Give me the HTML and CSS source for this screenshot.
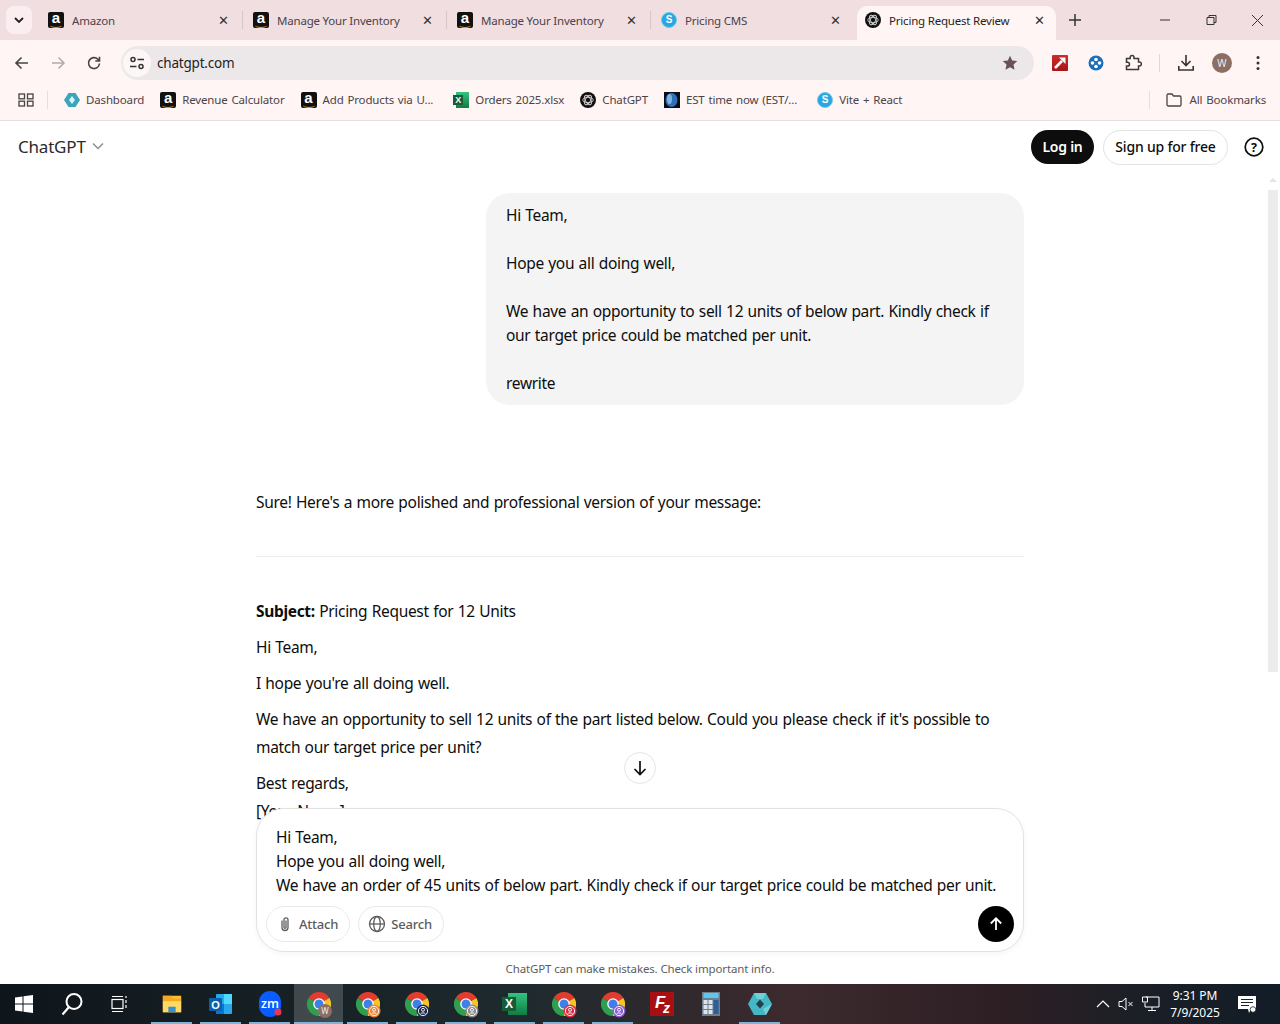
FILE: index.html
```html
<!DOCTYPE html>
<html lang="en">
<head>
    <meta charset="UTF-8">
    <title>Pricing Request Review</title>
    <link rel="stylesheet" href="styles.css">
</head>
<body>
    <svg class="defs" width="0" height="0">
        <symbol id="gpt" viewBox="0 0 16 16">
            <circle cx="8" cy="8" r="8" fill="#111"/>
            <g fill="none" stroke="#ccc" stroke-width=".9">
                <ellipse cx="8" cy="8" rx="5.200" ry="2.600"/>
                <ellipse cx="8" cy="8" rx="5.200" ry="2.600" transform="rotate(60 8 8)"/>
                <ellipse cx="8" cy="8" rx="5.200" ry="2.600" transform="rotate(120 8 8)"/>
            </g>
        </symbol>
        <symbol id="diamond" viewBox="0 0 16 16">
            <path d="M4.500 1h7L16 8l-4.500 7h-7L0 8z" fill="#3aa6b9"/>
            <path d="M8 4l3 4-3 4-3-4z" fill="#d8f3f6"/>
        </symbol>
        <symbol id="est" viewBox="0 0 16 16">
            <rect width="16" height="16" fill="#0a0d18"/>
            <ellipse cx="7.500" cy="8" rx="6" ry="7" fill="#2f6fb5"/>
            <ellipse cx="5.500" cy="7" rx="2.500" ry="5" fill="#7fb2e0"/>
        </symbol>
        <symbol id="chrome" viewBox="0 0 24 24">
            <path d="M12 12 1.600 6A12 12 0 0 1 22.400 6z" fill="#e33b2e"/>
            <path d="M12 12 22.400 6A12 12 0 0 1 12 24z" fill="#f7c325"/>
            <path d="M12 12V24A12 12 0 0 1 1.600 6z" fill="#2f9e4f"/>
            <circle cx="12" cy="12" r="5.800" fill="#fff"/>
            <circle cx="12" cy="12" r="4.500" fill="#3d80ea"/>
        </symbol>
        <symbol id="person" viewBox="0 0 14 14">
            <circle cx="7" cy="7" r="6.500" fill="currentColor"/>
            <circle cx="7" cy="7" r="4.600" fill="none" stroke="#fff" stroke-width=".9"/>
            <circle cx="7" cy="5.800" r="1.500" fill="none" stroke="#fff" stroke-width=".9"/>
            <path d="M4.500 10c.6-1.500 4.400-1.500 5 0" fill="none" stroke="#fff" stroke-width=".9"/>
        </symbol>
    </svg>

    <div class="tabstrip">
        <button class="tab-search">
            <svg width="10" height="6" viewBox="0 0 10 6"><path d="M1 1l4 4 4-4" fill="none" stroke="#222" stroke-width="1.800"/></svg>
        </button>
        <div class="tab tab-first">
            <span class="ic-amazon">a</span>
            <span class="tab-title">Amazon</span>
            <span class="tab-close">&#x2715;</span>
        </div>
        <div class="tab">
            <span class="ic-amazon">a</span>
            <span class="tab-title">Manage Your Inventory</span>
            <span class="tab-close">&#x2715;</span>
        </div>
        <div class="tab">
            <span class="ic-amazon">a</span>
            <span class="tab-title">Manage Your Inventory</span>
            <span class="tab-close">&#x2715;</span>
        </div>
        <div class="tab tab-last">
            <span class="ic-s">S</span>
            <span class="tab-title">Pricing CMS</span>
            <span class="tab-close">&#x2715;</span>
        </div>
        <div class="tab tab-active">
            <svg class="fav"><use href="#gpt"/></svg>
            <span class="tab-title">Pricing Request Review</span>
            <span class="tab-close">&#x2715;</span>
        </div>
        <svg class="new-tab" width="12" height="12" viewBox="0 0 12 12"><path d="M6 0v12M0 6h12" stroke="#333" stroke-width="1.500"/></svg>
        <div class="win-controls">
            <svg width="46" height="12" viewBox="0 0 46 12"><path d="M18 6h10" stroke="#333"/></svg>
            <svg width="46" height="12" viewBox="0 0 46 12"><path d="M19 3.500h7v7h-7zM21 3.500V1.500h7v7h-2" fill="none" stroke="#333"/></svg>
            <svg width="46" height="12" viewBox="0 0 46 12"><path d="M18 1l11 11M29 1L18 12" stroke="#333"/></svg>
        </div>
    </div>

    <div class="toolbar">
        <svg class="tool" width="16" height="16" viewBox="0 0 16 16"><path d="M14 8H2.500M7.500 2.500L2 8l5.500 5.500" fill="none" stroke="#444" stroke-width="1.600"/></svg>
        <svg class="tool" width="16" height="16" viewBox="0 0 16 16"><path d="M2 8h11.500M8.500 2.500L14 8l-5.500 5.500" fill="none" stroke="#b5abad" stroke-width="1.600"/></svg>
        <svg class="tool" width="16" height="16" viewBox="0 0 16 16"><path d="M13.500 8.500a5.500 5.500 0 1 1-1.600-4.300L13.500 6M13.500 1.800V6H9.300" fill="none" stroke="#444" stroke-width="1.600"/></svg>
        <div class="omnibox">
            <span class="site-chip">
                <svg width="16" height="14" viewBox="0 0 16 14"><g fill="none" stroke="#333" stroke-width="1.500"><circle cx="4" cy="3.500" r="2"/><path d="M8.500 3.500H15M1 10.500h6.500"/><circle cx="12" cy="10.500" r="2"/></g></svg>
            </span>
            <span class="url">chatgpt.com</span>
            <svg class="star" width="16" height="16" viewBox="0 0 16 16"><path d="M8 .8l2.200 4.700 5.100.6-3.800 3.500 1 5.100L8 12.200l-4.500 2.500 1-5.100L.7 6.100l5.100-.6z" fill="#6b505c"/></svg>
        </div>
        <div class="tool-right">
            <svg width="16" height="16" viewBox="0 0 16 16"><defs><linearGradient id="red-ext" x1="0" y1="0" x2="0" y2="1"><stop offset="0" stop-color="#d12a26"/><stop offset="1" stop-color="#a5161a"/></linearGradient></defs><rect width="16" height="16" rx="1" fill="url(#red-ext)"/><path d="M7 2.500h6.500V9z" fill="#fff"/><path d="M10 6L3 13" stroke="#fff" stroke-width="2.600"/></svg>
            <svg width="16" height="16" viewBox="0 0 16 16"><circle cx="8" cy="8" r="7.500" fill="#1b6fb8"/><circle cx="8" cy="4.500" r="1.800" fill="#fff"/><circle cx="8" cy="11.500" r="1.800" fill="#fff"/><circle cx="4.500" cy="8" r="1.800" fill="#fff"/><circle cx="11.500" cy="8" r="1.800" fill="#fff"/></svg>
            <svg width="18" height="18" viewBox="0 0 18 18"><path d="M2.500 4.500h3.700V3.400a1.900 1.900 0 0 1 3.800 0v1.100h4.500v3.600h1a1.900 1.900 0 0 1 0 3.800h-1v3.600H2.500v-3.400h1.100a1.900 1.900 0 0 0 0-3.800H2.500z" fill="none" stroke="#3a3a3a" stroke-width="1.500"/></svg>
            <span class="tool-sep"></span>
            <svg class="tool-dl" width="16" height="16" viewBox="0 0 16 16"><path d="M8 0v10M3.500 6L8 10.500 12.500 6M.8 11v4h14.400v-4" fill="none" stroke="#333" stroke-width="1.600"/></svg>
            <span class="avatar">W</span>
            <svg class="tool-menu" width="4" height="16" viewBox="0 0 4 16"><circle cx="2" cy="2.500" r="1.500" fill="#333"/><circle cx="2" cy="8" r="1.500" fill="#333"/><circle cx="2" cy="13.500" r="1.500" fill="#333"/></svg>
        </div>
    </div>

    <div class="bookmarks">
        <svg class="apps" width="16" height="14" viewBox="0 0 16 14"><g fill="none" stroke="#444" stroke-width="1.300"><rect x="1" y="1" width="5.500" height="4.800"/><rect x="9.500" y="1" width="5.500" height="4.800"/><rect x="1" y="8.200" width="5.500" height="4.800"/><rect x="9.500" y="8.200" width="5.500" height="4.800"/></g></svg>
        <span class="bm-sep"></span>
        <div class="bm"><svg class="fav"><use href="#diamond"/></svg>Dashboard</div>
        <div class="bm"><span class="ic-amazon">a</span>Revenue Calculator</div>
        <div class="bm bm-cut"><span class="ic-amazon">a</span>Add Products via U...</div>
        <div class="bm"><span class="ic-xls"><b>X</b></span>Orders 2025.xlsx</div>
        <div class="bm"><svg class="fav"><use href="#gpt"/></svg>ChatGPT</div>
        <div class="bm bm-cut"><svg class="fav"><use href="#est"/></svg>EST time now (EST/...</div>
        <div class="bm"><span class="ic-s">S</span>Vite + React</div>
        <div class="bm-all">
            <span class="bm-sep"></span>
            <svg width="16" height="14" viewBox="0 0 16 14"><path d="M1 2.500A1.300 1.300 0 0 1 2.300 1h3.700l1.500 2h6.200A1.300 1.300 0 0 1 15 4.300v7.400a1.300 1.300 0 0 1-1.300 1.300H2.300A1.300 1.300 0 0 1 1 11.700z" fill="none" stroke="#444" stroke-width="1.300"/></svg>
            All Bookmarks
        </div>
    </div>

    <div class="app">
        <header class="app-header">
            <div class="model">ChatGPT
                <svg width="12" height="8" viewBox="0 0 12 8"><path d="M1 1.500l5 5 5-5" fill="none" stroke="#8f8f8f" stroke-width="1.500"/></svg>
            </div>
            <button class="btn-login">Log in</button>
            <button class="btn-signup">Sign up for free</button>
            <svg class="help" width="20" height="20" viewBox="0 0 20 20"><circle cx="10" cy="10" r="8.800" fill="none" stroke="#0d0d0d" stroke-width="1.700"/><text x="10" y="14.500" text-anchor="middle" font-family="Open Sans" font-weight="700" font-size="12.500" fill="#0d0d0d">?</text></svg>
        </header>

        <div class="chat">
            <div class="thread">
                <div class="user-msg">Hi Team,<br><br>Hope you all doing well,<br><br>We have an opportunity to sell 12 units of below part. Kindly check if our target price could be matched per unit.<br><br>rewrite</div>
                <div class="reply">
                    <p>Sure! Here's a more polished and professional version of your message:</p>
                    <hr>
                    <p><strong>Subject:</strong> Pricing Request for 12 Units</p>
                    <p>Hi Team,</p>
                    <p>I hope you're all doing well.</p>
                    <p>We have an opportunity to sell 12 units of the part listed below. Could you please check if it's possible to match our target price per unit?</p>
                    <p>Best regards,<br>[Your Name]</p>
                </div>
            </div>
            <button class="scroll-down">
                <svg width="16" height="16" viewBox="0 0 16 16"><path d="M8 1v13.500M2.500 9L8 14.500 13.500 9" fill="none" stroke="#0d0d0d" stroke-width="1.700"/></svg>
            </button>
        </div>

        <div class="composer">
            <div class="composer-text">Hi Team,<br>Hope you all doing well,<br>We have an order of 45 units of below part. Kindly check if our target price could be matched per unit.</div>
            <div class="composer-row">
                <button class="pill">
                    <svg width="18" height="18" viewBox="0 0 18 18"><path d="M6 5.500v7a3 3 0 0 0 6 0V4.800a2 2 0 0 0-4 0v7.500a1 1 0 0 0 2 0V5.500" fill="none" stroke="#5d5d5d" stroke-width="1.300"/></svg>
                    Attach
                </button>
                <button class="pill">
                    <svg width="18" height="18" viewBox="0 0 18 18"><g fill="none" stroke="#5d5d5d" stroke-width="1.300"><circle cx="9" cy="9" r="7.500"/><ellipse cx="9" cy="9" rx="3.300" ry="7.500"/><path d="M1.500 9h15"/></g></svg>
                    Search
                </button>
                <button class="send">
                    <svg width="14" height="14" viewBox="0 0 14 14"><path d="M7 13V1.500M1.800 6.500L7 1.300l5.200 5.200" fill="none" stroke="#fff" stroke-width="1.800"/></svg>
                </button>
            </div>
        </div>
        <div class="disclaimer">ChatGPT can make mistakes. Check important info.</div>

        <div class="scrollbar">
            <span class="sb-arrow"></span>
            <span class="sb-thumb"></span>
        </div>
    </div>

    <footer class="taskbar">
        <div class="task task-sys">
            <svg width="18" height="18" viewBox="0 0 18 18"><path d="M0 2.500l7.500-1v7H0zM8.500 1.300L18 0v8.500H8.500zM0 9.500h7.500v7l-7.500-1zM8.500 9.500H18V18l-9.500-1.300z" fill="#fff"/></svg>
        </div>
        <div class="task task-sys">
            <svg width="24" height="24" viewBox="0 0 24 24"><circle cx="14" cy="9.500" r="7.500" fill="none" stroke="#fff" stroke-width="2"/><path d="M9 15L2.500 22.500" stroke="#fff" stroke-width="2.200"/></svg>
        </div>
        <div class="task task-sys">
            <svg width="18" height="18" viewBox="0 0 18 18"><g fill="none" stroke="#fff" stroke-width="1.200"><path d="M1 1.500h11M1 16.500h11"/><rect x="1" y="4.500" width="11" height="9"/><path d="M15 1v2M15 5v3M15 10v3"/></g></svg>
        </div>
        <div class="task-gap"></div>
        <div class="task task-on">
            <svg width="24" height="22" viewBox="0 0 26 24"><path d="M3 3h20v18H3z" fill="#fbc02d"/><path d="M3 3h9l2 3h9v3H3z" fill="#f6a821"/><rect x="3" y="9" width="20" height="12" fill="#ffd966"/><rect x="9" y="15" width="8" height="6" fill="#3a8fd0"/></svg>
        </div>
        <div class="task task-on">
            <svg width="24" height="24" viewBox="0 0 24 24"><rect x="7" y="2" width="16" height="20" rx="1" fill="#28a8ea"/><rect x="15" y="2" width="8" height="10" fill="#50d9ff"/><rect x="7" y="12" width="8" height="10" fill="#0078d4"/><rect y="6" width="13" height="13" rx="1" fill="#0a5fae"/><text x="6.500" y="16.500" text-anchor="middle" font-family="Liberation Sans" font-weight="700" font-size="11" fill="#fff">O</text></svg>
        </div>
        <div class="task task-on">
            <svg width="24" height="26" viewBox="0 0 24 26"><rect x="1" width="22" height="26" rx="11" fill="#0b5cff"/><text x="12" y="17" text-anchor="middle" font-family="Open Sans" font-weight="600" font-size="12.500" fill="#fff">zm</text><circle cx="20" cy="21" r="3.500" fill="#e5394a"/></svg>
        </div>
        <div class="task task-on task-active">
            <svg class="chrome-ic"><use href="#chrome"/></svg>
            <span class="badge badge-w">W</span>
        </div>
        <div class="task task-on">
            <svg class="chrome-ic"><use href="#chrome"/></svg>
            <svg class="badge badge-orange"><use href="#person"/></svg>
        </div>
        <div class="task task-on">
            <svg class="chrome-ic"><use href="#chrome"/></svg>
            <svg class="badge badge-navy"><use href="#person"/></svg>
        </div>
        <div class="task task-on">
            <svg class="chrome-ic"><use href="#chrome"/></svg>
            <svg class="badge badge-grey"><use href="#person"/></svg>
        </div>
        <div class="task task-on">
            <span class="ic-xls ic-xls-lg"><b>X</b></span>
        </div>
        <div class="task task-on">
            <svg class="chrome-ic"><use href="#chrome"/></svg>
            <svg class="badge badge-red"><use href="#person"/></svg>
        </div>
        <div class="task task-on">
            <svg class="chrome-ic"><use href="#chrome"/></svg>
            <svg class="badge badge-purple"><use href="#person"/></svg>
        </div>
        <div class="task">
            <svg width="24" height="24" viewBox="0 0 24 24"><rect width="24" height="24" fill="#a80f12"/><text x="5" y="16" font-family="Liberation Sans" font-weight="700" font-style="italic" font-size="17" fill="#fff">F</text><text x="13" y="21" font-family="Liberation Sans" font-weight="700" font-style="italic" font-size="14" fill="#fff">z</text></svg>
        </div>
        <div class="task">
            <svg width="18" height="24" viewBox="0 0 18 24"><rect width="18" height="24" fill="#6f7e8e"/><rect x="1.500" y="1" width="15" height="5" fill="#5cc8ee"/><g fill="#dce5ea"><rect x="1.500" y="8" width="4" height="4"/><rect x="6.500" y="8" width="4" height="4"/><rect x="1.500" y="13" width="4" height="4"/><rect x="6.500" y="13" width="4" height="4"/><rect x="1.500" y="18" width="4" height="4"/><rect x="6.500" y="18" width="4" height="4"/></g><rect x="11.500" y="8" width="5" height="14" fill="#2a5f9a"/></svg>
        </div>
        <div class="task task-on">
            <svg width="24" height="22" viewBox="0 0 24 22"><path d="M6 0h12l6 11-6 11H6L0 11z" fill="#45b7c4"/><path d="M6 0h12l-3 6H9zM24 11l-6 11-3-6z" fill="#6fd0d8"/><path d="M12 6.500l4 4.500-4 4.500L8 11z" fill="#233f4c"/></svg>
        </div>

        <div class="tray">
            <svg width="14" height="8" viewBox="0 0 14 8"><path d="M1 7l6-6 6 6" fill="none" stroke="#fff" stroke-width="1.200"/></svg>
            <svg width="16" height="14" viewBox="0 0 16 14"><path d="M1 4.500h3L8 1v12L4 9.500H1zM10.500 5l4 4M14.500 5l-4 4" fill="none" stroke="#fff"/></svg>
            <svg width="18" height="16" viewBox="0 0 18 16"><path d="M4 1h13v10H3V7M10 11v3M6 14.500h8M.5 1h5v5h-5z" fill="none" stroke="#fff"/></svg>
            <div class="clock"><span>9:31 PM</span><span>7/9/2025</span></div>
            <svg class="notify" width="18" height="17" viewBox="0 0 18 17"><path d="M0 0h18v13h-5l-2 4-1-4H0z" fill="#fff"/><path d="M3 3.500h12M3 6.500h12M3 9.500h8" stroke="#1a222b"/><circle cx="15" cy="13.500" r="2.800" fill="#fff" stroke="#1a222b" stroke-width=".8"/></svg>
        </div>
    </footer>
</body>
</html>
```

FILE: styles.css
```css
* {
    box-sizing: border-box;
}
html, body {
    margin: 0;
    height: 1024px;
    overflow: hidden;
}
body {
    display: flex;
    flex-direction: column;
    font-family: "Noto Sans", "Open Sans", sans-serif;
    color: #0d0d0d;
    background: #fff;
}
button {
    font-family: inherit;
    border: 0;
    background: none;
    padding: 0;
}
.defs {
    position: absolute;
}
.fav {
    width: 16px;
    height: 16px;
    flex: none;
}

/* site icons */
.ic-amazon {
    width: 16px;
    height: 16px;
    flex: none;
    position: relative;
    background: #111;
    border-radius: 2px;
    color: #fff;
    font-family: "Liberation Sans", sans-serif;
    font-size: 15px;
    font-weight: 700;
    line-height: 12px;
    letter-spacing: 0;
    text-align: center;
}
.ic-amazon::after {
    content: "";
    position: absolute;
    left: 2px;
    right: 2px;
    bottom: 0;
    height: 4px;
    border-bottom: 1.500px solid #f5a623;
    border-radius: 0 0 50% 50%;
}
.ic-s {
    width: 16px;
    height: 16px;
    flex: none;
    border-radius: 50%;
    background: #2aa6df;
    border: 1px solid #6cc8ee;
    color: #fff;
    font-family: "Liberation Sans", sans-serif;
    font-size: 10px;
    font-weight: 700;
    line-height: 14px;
    letter-spacing: 0;
    text-align: center;
}
.ic-xls {
    width: 16px;
    height: 16px;
    flex: none;
    position: relative;
    background: linear-gradient(#33c481, #107c41) 3px 0 / calc(100% - 3px) 100% no-repeat;
}
.ic-xls b {
    position: absolute;
    left: 0;
    top: 3px;
    width: 10px;
    height: 10px;
    background: #185c37;
    color: #fff;
    font-family: "Liberation Sans", sans-serif;
    font-size: 9px;
    line-height: 10px;
    letter-spacing: 0;
    text-align: center;
}
.ic-xls-lg {
    width: 25px;
    height: 22px;
    background-position: 6px 0;
    background-size: calc(100% - 6px) 100%;
}
.ic-xls-lg b {
    top: 4px;
    width: 14px;
    height: 14px;
    font-size: 12px;
    line-height: 14px;
}

/* browser chrome */
.tabstrip {
    height: 40px;
    flex: none;
    display: flex;
    align-items: flex-end;
    background: #f1dee1;
    padding-left: 6px;
}
.tab-search {
    width: 26px;
    height: 28px;
    margin: 0 6px 6px 0;
    border-radius: 8px;
    background: #fbeef0;
    display: flex;
    align-items: center;
    justify-content: center;
}
.tab {
    width: 204px;
    height: 34px;
    display: flex;
    align-items: center;
    padding: 0 13px 6px 10px;
    font-size: 11.500px;
    letter-spacing: -0.2px;
    color: #4b4347;
    position: relative;
}
.tab::after {
    content: "";
    position: absolute;
    right: 0;
    top: 5px;
    height: 18px;
    width: 1px;
    background: #d9c4c8;
}
.tab-first {
    width: 205px;
}
.tab-last {
    margin-right: 2px;
}
.tab-last::after, .tab-active::after {
    display: none;
}
.tab-title {
    flex: 1;
    margin-left: 8px;
    white-space: nowrap;
}
.tab-close {
    font-size: 13px;
    color: #333;
    width: 14px;
    text-align: center;
}
.tab-active {
    width: 199px;
    background: #fff5f4;
    border-radius: 10px 10px 0 0;
    color: #1f1f1f;
    padding: 0 10px 6px 8px;
}
.new-tab {
    margin: 0 0 14px 13px;
}
.win-controls {
    margin-left: auto;
    display: flex;
    margin-bottom: 14px;
}
.toolbar {
    height: 45px;
    flex: none;
    display: flex;
    align-items: center;
    background: #fff5f4;
    padding-left: 14px;
}
.tool {
    margin-right: 20px;
}
.omnibox {
    width: 913px;
    height: 34px;
    margin-left: -1px;
    border-radius: 17px;
    background: #ece8ea;
    display: flex;
    align-items: center;
    padding: 0 16px 0 2px;
}
.site-chip {
    width: 28px;
    height: 28px;
    border-radius: 14px;
    background: #fdf6f6;
    display: flex;
    align-items: center;
    justify-content: center;
}
.url {
    flex: 1;
    margin-left: 6px;
    font-size: 13.500px;
    letter-spacing: -0.2px;
    color: #1f1f1f;
}
.tool-right {
    display: flex;
    align-items: center;
    margin-left: 18px;
    gap: 20px;
}
.tool-sep {
    width: 1px;
    height: 18px;
    background: #e6d6d8;
    margin: 0 0 0 -3px;
}
.tool-dl {
    margin-left: -2px;
}
.avatar {
    width: 20px;
    height: 20px;
    border-radius: 50%;
    background: #8a6f66;
    color: #eee;
    font-size: 10px;
    display: flex;
    align-items: center;
    justify-content: center;
    margin: 0 -2px 0 -2px;
}
.tool-menu {
    margin-left: 6px;
}
.bookmarks {
    height: 36px;
    flex: none;
    display: flex;
    align-items: center;
    gap: 16px;
    background: #fff5f4;
    border-bottom: 1px solid #e8dfdf;
    padding: 0 14px 6px 18px;
    font-size: 11.500px;
    letter-spacing: -0.15px;
    word-spacing: 1px;
    color: #4b4347;
    white-space: nowrap;
}
.apps {
    margin-right: -3px;
}
.bm-sep {
    width: 1px;
    height: 18px;
    background: #eadbdd;
}
.bm {
    display: flex;
    align-items: center;
    gap: 6px;
}
.bm-cut {
    margin-right: 4px;
}
.bm-all {
    margin-left: auto;
    display: flex;
    align-items: center;
    gap: 8px;
}
.bm-all .bm-sep {
    margin-right: 8px;
}

/* page */
.app {
    flex: 1;
    min-height: 0;
    display: flex;
    flex-direction: column;
    background: #fff;
    position: relative;
}
.app-header {
    height: 53px;
    flex: none;
    display: flex;
    align-items: center;
    padding: 0 16px 1px 18px;
}
.model {
    font-size: 17px;
    letter-spacing: -0.2px;
    margin: 0 auto 2px 0;
    display: flex;
    align-items: center;
    gap: 6px;
    color: #2b2b2b;
}
.btn-login {
    height: 34px;
    width: 63px;
    margin-right: 1px;
    padding-bottom: 2px;
    border-radius: 17px;
    background: #0d0d0d;
    color: #fff;
    font-size: 14px;
    font-weight: 600;
    letter-spacing: -0.25px;
}
.btn-signup {
    height: 35px;
    width: 125px;
    margin: 0 16px 0 8px;
    padding-bottom: 2px;
    border-radius: 18px;
    border: 1px solid #e3e3e3;
    color: #0d0d0d;
    font-size: 14px;
    font-weight: 500;
    letter-spacing: -0.2px;
}
.chat {
    flex: 1;
    min-height: 0;
    overflow: hidden;
    position: relative;
}
.thread {
    width: 768px;
    margin: 0 auto;
    padding-top: 19px;
    font-size: 15.500px;
    letter-spacing: -0.32px;
    word-spacing: 0.7px;
}
.user-msg {
    width: 538px;
    margin-left: auto;
    padding: 10px 20px;
    line-height: 24px;
    background: #f4f4f4;
    border-radius: 24px;
}
.reply {
    padding-top: 83px;
    line-height: 28px;
}
.reply p {
    margin: 0 0 8px;
}
.reply strong {
    font-weight: 700;
}
.reply hr {
    border: 0;
    border-top: 1px solid #ececec;
    margin: 40px 0 40px;
}
.scroll-down {
    position: absolute;
    left: 624px;
    bottom: 52px;
    width: 32px;
    height: 32px;
    border-radius: 50%;
    border: 1px solid #e5e5e5;
    background: #fff;
    display: flex;
    align-items: center;
    justify-content: center;
}
.composer {
    width: 768px;
    height: 144px;
    margin: -28px auto 0;
    flex: none;
    position: relative;
    background: #fff;
    border: 1px solid #e2e2e2;
    border-radius: 28px;
    box-shadow: 0 2px 6px rgba(0, 0, 0, 0.04);
    padding: 16px 9px 9px;
    font-size: 15.500px;
    letter-spacing: -0.32px;
    word-spacing: 0.7px;
}
.composer-text {
    line-height: 24px;
    padding: 0 10px;
    white-space: nowrap;
}
.composer-row {
    display: flex;
    align-items: center;
    gap: 8px;
    margin-top: 9px;
}
.pill {
    height: 36px;
    padding: 0 11px 0 9px;
    border: 1px solid #e8e8e8;
    border-radius: 18px;
    display: flex;
    align-items: center;
    gap: 5px;
    font-size: 13px;
    font-weight: 500;
    letter-spacing: -0.2px;
    color: #5d5d5d;
}
.send {
    width: 36px;
    height: 36px;
    margin-left: auto;
    border-radius: 50%;
    background: #000;
    display: flex;
    align-items: center;
    justify-content: center;
}
.disclaimer {
    height: 32px;
    flex: none;
    display: flex;
    align-items: center;
    justify-content: center;
    font-size: 11.500px;
    letter-spacing: -0.14px;
    color: #5d5d5d;
}
.scrollbar {
    position: absolute;
    top: 57px;
    right: 2px;
    width: 10px;
    display: flex;
    flex-direction: column;
    align-items: center;
}
.sb-arrow {
    border: 4px solid transparent;
    border-top: 0;
    border-bottom: 4px solid #e4e4e4;
    margin-bottom: 8px;
}
.sb-thumb {
    width: 10px;
    height: 482px;
    background: #ececec;
}

/* windows taskbar */
.taskbar {
    height: 40px;
    flex: none;
    display: flex;
    align-items: stretch;
    background: linear-gradient(90deg, #0f161b 0%, #172126 25%, #1d2a2e 40%, #33292d 55%, #3c2a2e 62%, #2d1f24 78%, #1a1f27 90%, #121c26 100%);
}
.task {
    width: 49px;
    display: flex;
    align-items: center;
    justify-content: center;
    position: relative;
}
.task-sys {
    width: 48px;
}
.task-gap {
    width: 3px;
}
.task-on::after {
    content: "";
    position: absolute;
    left: 4px;
    right: 4px;
    bottom: 0;
    height: 2px;
    background: #7db5d8;
}
.task-active {
    background: rgba(255, 255, 255, 0.18);
}
.task-active::after {
    left: 0;
    right: 0;
}
.chrome-ic {
    width: 24px;
    height: 24px;
}
.badge {
    position: absolute;
    left: 24px;
    top: 20px;
    width: 14px;
    height: 14px;
}
.badge-w {
    background: #8a6f66;
    border-radius: 50%;
    color: #eee;
    font-size: 8px;
    text-align: center;
    line-height: 14px;
}
.badge-orange {
    color: #e8833a;
}
.badge-navy {
    color: #1d2b4a;
}
.badge-grey {
    color: #8d8d8d;
}
.badge-red {
    color: #d93045;
}
.badge-purple {
    color: #8a5fd0;
}
.tray {
    margin-left: auto;
    display: flex;
    align-items: center;
    color: #fff;
}
.tray svg {
    margin-right: 8px;
}
.clock {
    display: flex;
    flex-direction: column;
    align-items: center;
    width: 70px;
    font-size: 12px;
    line-height: 17px;
    letter-spacing: -0.1px;
    margin: 0 8px 0 -8px;
}
.tray .notify {
    margin-right: 24px;
}
```
